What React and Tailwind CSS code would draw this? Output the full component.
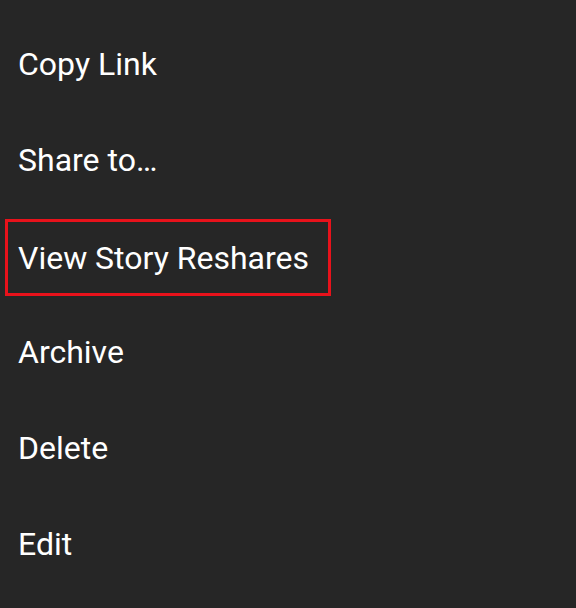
export default function App() {
  const items = ["Copy Link", "Share to…", "View Story Reshares", "Archive", "Delete", "Edit"];
  return (
    <div className="w-[576px] h-[608px] bg-[#262626] pt-4 overflow-hidden" style={{ fontFamily: "Roboto, 'Noto Sans', sans-serif" }}>
      {items.map((t, i) =>
        i === 2 ? (
          <div key={t} className="h-24 flex items-center pl-[5px]">
            <span className="h-[77px] flex items-center border-[3px] border-[#e8121b] pl-[10px] pr-[19px] text-white text-[32px] mt-[3px]">
              {t}
            </span>
          </div>
        ) : (
          <div key={t} className="h-24 flex items-center pl-[18px] text-white text-[32px]">
            {t}
          </div>
        )
      )}
    </div>
  );
}
